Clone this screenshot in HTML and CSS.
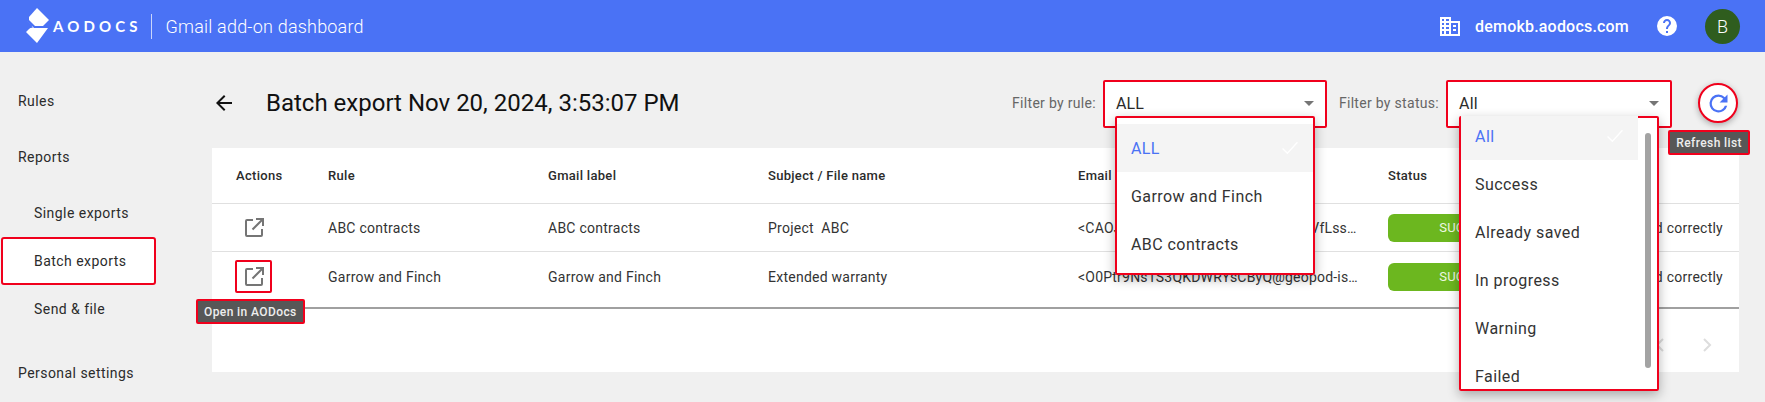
FILE: index.html
```html
<!DOCTYPE html>
<html lang="en">
<head>
    <meta charset="UTF-8">
    <meta name="viewport" content="width=device-width, initial-scale=1.0">
    <title>Gmail add-on dashboard</title>
    <link rel="stylesheet" href="styles.css">
</head>
<body>

    <!-- Top bar -->
    <header class="topbar">
        <div class="logo">
            <svg class="logo-mark" width="24" height="36" viewBox="0 0 24 36">
                <path fill="#fff" d="M11 0 23 12 17 18 H9 L3 12 V9 Z"/>
                <path fill="#fff" d="M0 12 8 20 H22 L11 35 0 24 6 18 Z"/>
                <path fill="#4a72f5" d="M0 12.500 7 19.500 0 21Z"/>
            </svg>
            <span class="logo-text">AODOCS</span>
        </div>
        <span class="app-name">Gmail add-on dashboard</span>
        <div class="topbar-right">
            <svg class="domain-icon" width="22" height="22" viewBox="0 0 22 22">
                <path fill="#fff" fill-rule="evenodd" d="M1 2h11v4h9v15H1zM3 4v2h2V4zM7 4v2h3V4zM3 8v2h2V8zM7 8v2h3V8zM3 12v2h2v-2zM7 12v2h3v-2zM3 16v3h2v-3zM7 16v3h3v-3zM12 8v11h7V8zM14 10h3v2h-3zM14 14h3v2h-3z"/>
            </svg>
            <span class="domain">demokb.aodocs.com</span>
            <svg class="help-icon" width="24" height="24" viewBox="0 0 24 24">
                <path fill="#fff" d="M12 2a10 10 0 1 0 0 20 10 10 0 0 0 0-20zm1 17h-2v-2h2v2zm2.070-7.750-.900.920C13.450 12.900 13 13.500 13 15h-2v-.500c0-1.100.450-2.100 1.170-2.830l1.240-1.260c.370-.360.590-.860.590-1.410 0-1.100-.900-2-2-2s-2 .900-2 2H8c0-2.210 1.790-4 4-4s4 1.790 4 4c0 .880-.360 1.680-.930 2.250z"/>
            </svg>
            <span class="avatar">B</span>
        </div>
    </header>

    <div class="page">

        <!-- Side menu -->
        <nav class="sidenav">
            <a class="nav-item">Rules</a>
            <a class="nav-item nav-group">Reports</a>
            <a class="nav-item nav-sub nav-first">Single exports</a>
            <a class="nav-item nav-sub nav-active">Batch exports</a>
            <a class="nav-item nav-sub">Send &amp; file</a>
            <a class="nav-item nav-settings">Personal settings</a>
        </nav>

        <main class="content">
            <div class="toolbar">
                <svg class="back-icon" width="24" height="24" viewBox="0 0 24 24">
                    <path fill="#111" d="M20 11H7.830l5.590-5.590L12 4l-8 8 8 8 1.410-1.410L7.830 13H20z"/>
                </svg>
                <h1 class="page-title">Batch export Nov 20, 2024, 3:53:07 PM</h1>

                <span class="filter-label filter-label-rule">Filter by rule:</span>
                <div class="select select-rule marked">
                    <span>ALL</span>
                    <i class="caret"></i>
                    <ul class="menu marked">
                        <li class="menu-item menu-selected">ALL
                            <svg class="check" width="18" height="14" viewBox="0 0 20 16"><path fill="none" stroke="#fff" stroke-width="1.500" d="M1.500 8.500 7 14 18.500 1.500"/></svg>
                        </li>
                        <li class="menu-item">Garrow and Finch</li>
                        <li class="menu-item">ABC contracts</li>
                    </ul>
                </div>

                <span class="filter-label filter-label-status">Filter by status:</span>
                <div class="select select-status marked">
                    <span>All</span>
                    <i class="caret"></i>
                    <ul class="menu menu-status marked">
                        <li class="menu-item menu-selected">All
                            <svg class="check" width="18" height="14" viewBox="0 0 20 16"><path fill="none" stroke="#fff" stroke-width="1.500" d="M1.500 8.500 7 14 18.500 1.500"/></svg>
                        </li>
                        <li class="menu-item">Success</li>
                        <li class="menu-item">Already saved</li>
                        <li class="menu-item">In progress</li>
                        <li class="menu-item">Warning</li>
                        <li class="menu-item">Failed</li>
                        <li class="scrollbar"></li>
                    </ul>
                </div>

                <div class="refresh">
                    <svg width="27" height="27" viewBox="0 0 24 24">
                        <path fill="#4a72f5" d="M17.650 6.350A7.958 7.958 0 0 0 12 4a8 8 0 1 0 7.740 10h-2.080A6 6 0 1 1 12 6c1.660 0 3.140.690 4.220 1.780L13 11h7V4z"/>
                    </svg>
                    <span class="tooltip tooltip-refresh">Refresh list</span>
                </div>
            </div>

            <section class="panel">
                <table class="log-table">
                    <thead>
                        <tr>
                            <th class="col-actions">Actions</th>
                            <th class="col-rule">Rule</th>
                            <th class="col-label">Gmail label</th>
                            <th class="col-subject">Subject / File name</th>
                            <th class="col-email">Email ID</th>
                            <th class="col-status">Status</th>
                            <th>Message</th>
                        </tr>
                    </thead>
                    <tbody>
                        <tr>
                            <td class="cell-action">
                                <span class="open-link">
                                    <svg width="24" height="24" viewBox="0 0 24 24"><path fill="none" stroke="#757575" stroke-width="2" d="M11 4H5a1 1 0 0 0-1 1v14a1 1 0 0 0 1 1h14a1 1 0 0 0 1-1v-6M14 3h7v7M21 3 10.500 13.500"/></svg>
                                </span>
                            </td>
                            <td>ABC contracts</td>
                            <td>ABC contracts</td>
                            <td>Project &nbsp;ABC</td>
                            <td><div class="email">&lt;CAOJ7kRmT2xPqN4hGvB8sYwZ3aVfLssXyTd@mail.gmail.com&gt;</div></td>
                            <td><span class="pill">SUCCESS</span></td>
                            <td class="cell-message">Message saved correctly</td>
                        </tr>
                        <tr>
                            <td class="cell-action">
                                <span class="open-link marked">
                                    <svg width="24" height="24" viewBox="0 0 24 24"><path fill="none" stroke="#757575" stroke-width="2" d="M11 4H5a1 1 0 0 0-1 1v14a1 1 0 0 0 1 1h14a1 1 0 0 0 1-1v-6M14 3h7v7M21 3 10.500 13.500"/></svg>
                                    <span class="tooltip tooltip-open">Open in AODocs</span>
                                </span>
                            </td>
                            <td>Garrow and Finch</td>
                            <td>Garrow and Finch</td>
                            <td>Extended warranty</td>
                            <td><div class="email">&lt;O0Ptr9Ns1S3QKDWRYsCByQ@geopod-ismtpd-12-0@mail.example.com&gt;</div></td>
                            <td><span class="pill">SUCCESS</span></td>
                            <td class="cell-message">Message saved correctly</td>
                        </tr>
                    </tbody>
                </table>
                <div class="pager">
                    <svg width="24" height="24" viewBox="0 0 24 24"><path fill="none" stroke="#ddd" stroke-width="2" d="M15 6l-6 6 6 6"/></svg>
                    <svg width="24" height="24" viewBox="0 0 24 24"><path fill="none" stroke="#ddd" stroke-width="2" d="M9 6l6 6-6 6"/></svg>
                </div>
            </section>
        </main>
    </div>

</body>
</html>
```

FILE: styles.css
```css
* {
    box-sizing: border-box;
}
html, body {
    height: 402px;
    overflow: hidden;
}
body {
    margin: 0;
    background-color: #f0f0f0;
    font-family: Roboto, Arial, sans-serif;
    color: #2b2b2b;
}

/* Top bar */
.topbar {
    display: flex;
    align-items: center;
    height: 52px;
    padding-left: 26px;
    background-color: #4a72f5;
    color: #fff;
}
.logo {
    display: flex;
    align-items: center;
    height: 25px;
    padding-right: 9px;
    border-right: 1px solid #c9d5fb;
}
.logo-mark {
    flex: none;
}
.logo-text {
    margin-left: 3px;
    font-family: Lato, Arial, sans-serif;
    font-size: 15px;
    font-weight: 700;
    letter-spacing: 4.100px;
}
.app-name {
    margin-left: 14px;
    font-size: 18px;
    font-weight: 300;
    letter-spacing: .2px;
}
.topbar-right {
    display: flex;
    align-items: center;
    margin-left: auto;
    padding-right: 25px;
}
.domain {
    margin-left: 14px;
    font-size: 16px;
    font-weight: 500;
    letter-spacing: .2px;
}
.help-icon {
    margin-left: 26px;
}
.avatar {
    display: flex;
    align-items: center;
    justify-content: center;
    width: 35px;
    height: 35px;
    margin-left: 26px;
    border-radius: 50%;
    background-color: #2f5d1e;
    font-size: 18px;
    font-weight: 300;
}

/* Page */
.page {
    display: flex;
    height: 350px;
}
.sidenav {
    display: flex;
    flex: none;
    flex-direction: column;
    width: 212px;
    padding-top: 25px;
}
.nav-item {
    display: flex;
    align-items: center;
    width: 155px;
    height: 48px;
    margin-left: 1px;
    padding-left: 17px;
    font-size: 14px;
    letter-spacing: .45px;
}
.nav-group {
    margin-top: 8px;
}
.nav-sub {
    padding-left: 33px;
}
.nav-first {
    margin-top: 8px;
}
.nav-active {
    border: 2px solid #f0001c;
    border-radius: 3px;
    background-color: #fff;
    padding-left: 31px;
}
.nav-settings {
    margin-top: 16px;
}
.content {
    flex: none;
    width: 1527px;
}
.toolbar {
    display: flex;
    align-items: center;
    height: 96px;
    padding-top: 6px;
}
.back-icon {
    flex: none;
}
.page-title {
    margin: 0 0 0 30px;
    color: #111;
    font-size: 24px;
    font-weight: 400;
    white-space: nowrap;
}
.filter-label {
    color: #666;
    font-size: 14px;
    letter-spacing: .3px;
    white-space: nowrap;
}
.filter-label-rule {
    margin-left: auto;
}
.filter-label-status {
    margin-left: 12px;
}
.select {
    position: relative;
    display: flex;
    align-items: center;
    justify-content: space-between;
    height: 48px;
    margin: 2px 0 0 7px;
    padding: 0 13px 2px 13px;
    background-color: #fff;
    font-size: 16px;
    letter-spacing: .2px;
}
.select-rule {
    width: 224px;
}
.select-status {
    width: 226px;
}
.marked {
    outline: 2px solid #f0001c;
    outline-offset: -2px;
    border-radius: 2px;
}
.caret {
    width: 0;
    height: 0;
    border-top: 5px solid #757575;
    border-right: 5px solid transparent;
    border-left: 5px solid transparent;
}
.menu {
    position: absolute;
    top: 36px;
    left: 12px;
    z-index: 5;
    width: 200px;
    height: 159px;
    margin: 0;
    padding: 8px 2px;
    overflow: hidden;
    background-color: #fff;
    box-shadow: 0 4px 12px rgba(0, 0, 0, .3);
    list-style: none;
}
.menu-status {
    left: 13px;
    height: 275px;
    padding: 2px;
}
.menu-item {
    position: relative;
    display: flex;
    align-items: center;
    justify-content: space-between;
    height: 48px;
    padding: 0 14px;
    color: #333;
    font-size: 16px;
    letter-spacing: .45px;
}
.menu-selected {
    background-color: #f4f4f4;
    color: #4a72f5;
}
.menu-status .menu-item {
    margin-right: 19px;
}
.menu-status .menu-item:first-child {
    margin-top: -6px;
}
.scrollbar {
    position: absolute;
    top: 17px;
    right: 8px;
    width: 6px;
    height: 235px;
    border-radius: 3px;
    background-color: #a3a3a3;
}
.refresh {
    position: relative;
    display: flex;
    flex: none;
    align-items: center;
    justify-content: center;
    width: 40px;
    height: 40px;
    margin: 0 1px 0 26px;
    border: 2px solid #f0001c;
    border-radius: 50%;
    background-color: #fff;
    box-shadow: 0 2px 6px rgba(0, 0, 0, .3);
}
.tooltip {
    position: absolute;
    z-index: 6;
    display: flex;
    align-items: center;
    height: 25px;
    padding: 0 6px;
    border: 2px solid #f0001c;
    border-radius: 2px;
    background-color: #575757;
    color: #eee;
    font-size: 12px;
    font-weight: 500;
    letter-spacing: .4px;
    white-space: nowrap;
}
.tooltip-refresh {
    top: 45px;
    right: -14px;
}
.tooltip-open {
    top: 39px;
    left: -39px;
}

/* Results panel */
.panel {
    height: 224px;
    background-color: #fff;
}
.log-table {
    width: 100%;
    border-collapse: collapse;
    table-layout: fixed;
    border-bottom: 2px solid #a0a0a0;
    color: #333;
    font-size: 14px;
    letter-spacing: .25px;
}
.log-table th {
    height: 55px;
    padding: 0;
    border-bottom: 1px solid #e0e0e0;
    color: #2b2b2b;
    font-size: 13px;
    font-weight: 500;
    letter-spacing: .3px;
    text-align: left;
}
.log-table td {
    height: 48px;
    padding: 1px 0 0;
    border-bottom: 1px solid #e0e0e0;
    white-space: nowrap;
}
.log-table tr:last-child td {
    height: 57px;
    padding-bottom: 6px;
    border-bottom: 0;
}
.log-table .col-actions {
    width: 116px;
    padding-left: 24px;
}
.col-rule, .col-label {
    width: 220px;
}
.col-subject {
    width: 310px;
}
.col-email {
    width: 310px;
}
.col-status {
    width: 160px;
}
.log-table .cell-action {
    padding-left: 23px;
}
.open-link {
    position: relative;
    display: inline-flex;
    align-items: center;
    justify-content: center;
    width: 37px;
    height: 33px;
}
.email {
    overflow: hidden;
    width: 280px;
    letter-spacing: .2px;
    text-overflow: ellipsis;
}
.pill {
    display: flex;
    align-items: center;
    justify-content: center;
    width: 160px;
    height: 28px;
    border-radius: 6px;
    background-color: #6cb71f;
    color: #eef7e2;
    font-size: 13px;
}
.log-table .cell-message {
    padding-right: 16px;
    text-align: right;
}
.pager {
    display: flex;
    justify-content: flex-end;
    gap: 23px;
    padding: 24px 20px 0 0;
}
```
